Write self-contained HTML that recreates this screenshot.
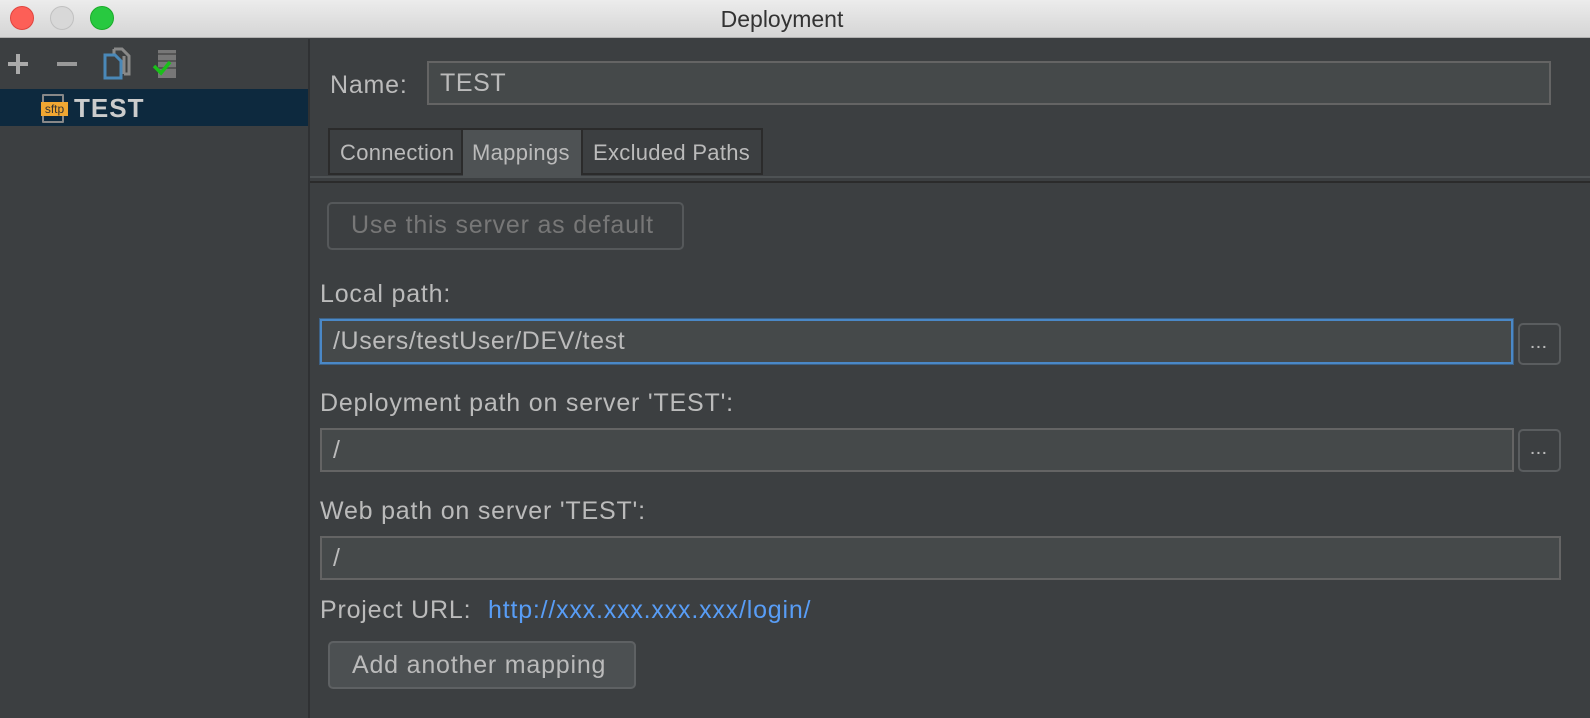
<!DOCTYPE html>
<html><head><style>
*{margin:0;padding:0;box-sizing:border-box}
body{width:1590px;height:718px;background:#3c3f41;font-family:"Liberation Sans",sans-serif;color:#bbbbbb;position:relative;overflow:hidden}
.a{position:absolute}
.t{font-size:25px;letter-spacing:0.8px;white-space:nowrap}
.f{position:absolute;background:#45494a;border:2px solid #646464;font-size:25px;letter-spacing:0.6px;color:#bbbbbb;padding-left:11px;line-height:41px}
.b{position:absolute;border:2px solid #5a5d5f;border-radius:5px;background:#3c3f41;color:#bbb;font-size:14px;font-weight:bold;text-align:center;letter-spacing:2px;line-height:36px}
.tab{font-size:22px;letter-spacing:0.3px}
</style></head><body>
<div class="a" style="left:0;top:0;width:1590px;height:38px;background:linear-gradient(#ececec,#d5d5d5);border-bottom:1px solid #b0b0b0"></div>
<div class="a" style="left:10px;top:6px;width:24px;height:24px;border-radius:50%;background:#fd5f57;border:1px solid #e0443e"></div>
<div class="a" style="left:50px;top:6px;width:24px;height:24px;border-radius:50%;background:#d8d8d8;border:1px solid #c0c0c0"></div>
<div class="a" style="left:90px;top:6px;width:24px;height:24px;border-radius:50%;background:#28c940;border:1px solid #1aab29"></div>
<div class="a" style="left:0;width:1564px;top:6px;text-align:center;color:#333;font-size:23px">Deployment</div>
<div class="a" style="left:308px;top:39px;width:2px;height:679px;background:#2f3133"></div>
<div class="a" style="left:8px;top:62px;width:20px;height:4px;background:#aaa"></div>
<div class="a" style="left:16px;top:54px;width:4px;height:20px;background:#aaa"></div>
<div class="a" style="left:57px;top:62px;width:20px;height:4px;background:#999"></div>
<svg class="a" style="left:102px;top:47px" width="32" height="34"><path d="M12 2h8l7 7v18h-5" fill="none" stroke="#888" stroke-width="3"/><path d="M12 2v5M22 27v-18" stroke="#888" stroke-width="3"/><path d="M3 8h10l6 6v17H3z" fill="none" stroke="#4a88b8" stroke-width="3"/></svg>
<svg class="a" style="left:152px;top:48px" width="28" height="32"><rect x="6" y="2" width="18" height="28" fill="#777"/><path d="M6 6h18M6 13h18M6 20h18" stroke="#555" stroke-width="2"/><path d="M2 18l7 7 9-11" fill="none" stroke="#19c019" stroke-width="3.5"/></svg>
<div class="a" style="left:0;top:89px;width:308px;height:37px;background:#0d293e"></div>
<div class="a" style="left:42px;top:94px;width:22px;height:29px;border:2px solid #888;border-radius:1px"></div>
<div class="a" style="left:41px;top:102px;width:27px;height:14px;background:#f0a732;color:#333;font-size:12px;line-height:14px;text-align:center">sftp</div>
<div class="a" style="left:74px;top:93px;font-weight:bold;font-size:26px;letter-spacing:1px;color:#ccc">TEST</div>
<div class="a t" style="left:330px;top:71px">Name:</div>
<div class="f" style="left:427px;top:61px;width:1124px;height:44px">TEST</div>
<div class="a" style="left:328px;top:128px;width:435px;height:47px;border:2px solid #2b2b2b;background:#3c3f41"></div>
<div class="a" style="left:461px;top:128px;width:2px;height:47px;background:#2b2b2b"></div>
<div class="a" style="left:463px;top:130px;width:118px;height:46px;background:#4e5254"></div>
<div class="a" style="left:581px;top:128px;width:2px;height:47px;background:#2b2b2b"></div>
<div class="a tab" style="left:340px;top:140px">Connection</div>
<div class="a tab" style="left:472px;top:140px">Mappings</div>
<div class="a tab" style="left:593px;top:140px">Excluded Paths</div>
<div class="a" style="left:310px;top:176px;width:1280px;height:2px;background:#4e5254"></div>
<div class="a" style="left:310px;top:181px;width:1280px;height:2px;background:#2b2b2b"></div>
<div class="a" style="left:327px;top:202px;width:357px;height:48px;border:2px solid #55585a;border-radius:5px"></div>
<div class="a t" style="left:351px;top:211px;color:#777">Use this server as default</div>
<div class="a t" style="left:320px;top:280px">Local path:</div>
<div class="f" style="left:320px;top:319px;width:1193px;height:45px;border-color:#4a88c7;box-shadow:0 0 0 1px #3d6185">/Users/testUser/DEV/test</div>
<div class="b" style="left:1518px;top:323px;width:43px;height:42px">...</div>
<div class="a t" style="left:320px;top:389px">Deployment path on server 'TEST':</div>
<div class="f" style="left:320px;top:428px;width:1194px;height:44px">/</div>
<div class="b" style="left:1518px;top:429px;width:43px;height:43px">...</div>
<div class="a t" style="left:320px;top:497px">Web path on server 'TEST':</div>
<div class="f" style="left:320px;top:536px;width:1241px;height:44px">/</div>
<div class="a t" style="left:320px;top:596px">Project URL:</div>
<div class="a t" style="left:488px;top:596px;color:#589df6">http://xxx.xxx.xxx.xxx/login/</div>
<div class="a" style="left:328px;top:641px;width:308px;height:48px;border:2px solid #5e6163;border-radius:5px;background:#4c5052"></div>
<div class="a t" style="left:352px;top:651px">Add another mapping</div>
</body></html>
